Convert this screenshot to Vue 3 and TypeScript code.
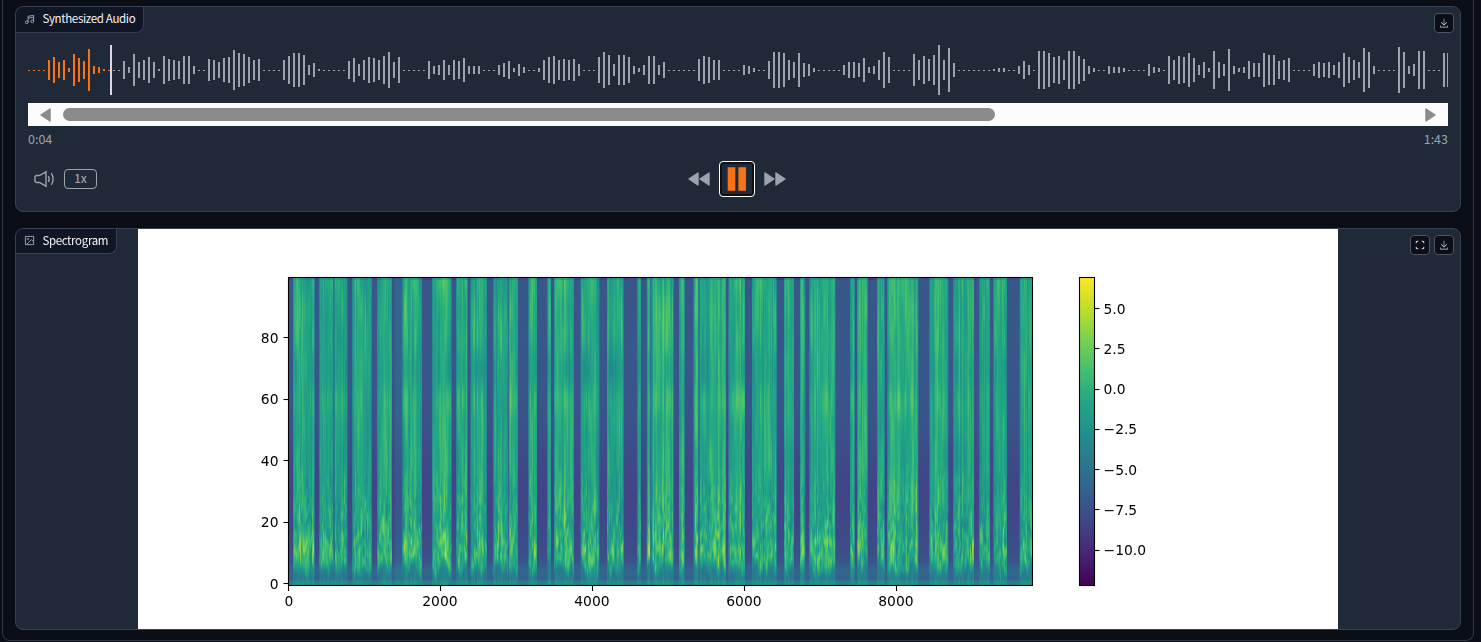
<script setup lang="ts">
import { onMounted, ref } from 'vue'

const heights: number[] = [
  1, 1, 1, 1, 20, 26, 16, 20, 4, 32, 24, 18, 42, 8, 6, 2, 1, 1, 1, 18, 6, 32, 16, 20, 26, 16, 2, 28, 22, 20,
  18, 28, 28, 8, 1, 1, 22, 20, 16, 24, 26, 40, 34, 32, 26, 20, 22, 1, 1, 1, 1, 20, 28, 34, 34, 30, 10, 14, 2, 1,
  1, 1, 1, 1, 18, 24, 12, 20, 26, 24, 20, 28, 36, 16, 26, 1, 1, 1, 1, 1, 18, 8, 10, 20, 10, 20, 18, 24, 8, 8,
  8, 1, 1, 1, 10, 14, 18, 4, 12, 6, 1, 1, 4, 20, 26, 28, 20, 22, 20, 22, 12, 1, 1, 1, 26, 36, 30, 12, 30, 30,
  26, 8, 4, 10, 28, 28, 10, 16, 1, 1, 1, 1, 1, 1, 22, 28, 26, 20, 20, 1, 1, 1, 1, 10, 8, 4, 1, 1, 18, 36,
  36, 34, 20, 16, 34, 14, 12, 4, 1, 1, 1, 1, 1, 10, 16, 16, 14, 24, 6, 8, 20, 36, 26, 1, 1, 1, 1, 32, 20, 28,
  22, 30, 50, 20, 44, 14, 1, 1, 1, 1, 1, 1, 1, 2, 4, 4, 1, 1, 8, 18, 10, 1, 38, 38, 34, 26, 28, 20, 38, 38,
  28, 22, 8, 4, 1, 1, 8, 6, 6, 4, 1, 1, 1, 1, 12, 6, 4, 1, 28, 20, 28, 26, 34, 24, 10, 16, 4, 38, 16, 12,
  42, 8, 4, 6, 18, 14, 14, 34, 30, 30, 18, 20, 24, 1, 1, 1, 1, 12, 16, 14, 16, 10, 16, 34, 26, 20, 16, 44, 36, 8,
  1, 1, 1, 1, 46, 36, 8, 12, 38, 38, 1, 1, 1, 34,
]
const bars = heights.map((h, i) => ({ x: i * 5, h, y: h === 1 ? 25 : 25 - h / 2, played: i < 17 }))

const yTicks = [0, 20, 40, 60, 80].map((v) => ({
  v,
  y: Math.round(354 - v * 3.07) + 0.5,
  base: Math.floor(360.2 - v * 3.075),
}))
const xTicks = [0, 2000, 4000, 6000, 8000].map((v) => ({ v, x: Math.round(150.4 + v * 0.0759) + 0.5 }))
const barTicks = ['5.0', '2.5', '0.0', '−2.5', '−5.0', '−7.5', '−10.0'].map((v, i) => ({
  v,
  y: Math.floor(79.4 + i * 40.3) + 0.5,
  base: Math.floor(85 + i * 40.27),
}))

const viridis: [number, number, number][] = [
  [68, 1, 84], [72, 36, 117], [65, 68, 135], [53, 95, 141], [42, 120, 142], [33, 145, 140],
  [34, 168, 132], [68, 191, 112], [122, 209, 81], [189, 223, 38], [253, 231, 37],
]

// voiced stretches, in pixels of the plot area
const segments: [number, number][] = [
  [4, 25.5], [30.3, 44.5], [45.5, 58.3], [63.3, 82.7], [88, 103], [113.3, 133], [143.3, 162.5],
  [167.3, 178.5], [181.5, 197.7], [204.3, 219.3], [219.9, 229], [239.5, 248], [258.3, 262], [265, 285],
  [291.7, 310.3], [318, 334.7], [348.3, 352], [357.7, 361.5], [362.3, 384.5], [390, 395.7],
  [404.5, 409.5], [410.5, 437], [439.5, 456], [463, 487.7], [495, 505], [511, 516.3], [520.3, 546.3],
  [561, 565.7], [568, 578.7], [588, 595.7], [598.3, 629.3], [640.3, 659.3], [664.3, 685], [690.3, 701],
  [704.3, 718], [730.7, 744],
]

function hash(x: number, y: number, s: number): number {
  let h = Math.imul(x + 101, 374761393) ^ Math.imul(y + 57, 668265263) ^ Math.imul(s + 11, 1274126177)
  h = Math.imul(h ^ (h >>> 13), 1274126177)
  h = Math.imul(h ^ (h >>> 15), 2246822519)
  return ((h ^ (h >>> 16)) >>> 0) / 4294967295
}
function noise(x: number, y: number, sx: number, sy: number, s: number): number {
  const fx = x / sx
  const fy = y / sy
  const ix = Math.floor(fx)
  const iy = Math.floor(fy)
  const ux = fx - ix
  const q = fy - iy
  const uy = q * q * (3 - 2 * q)
  const a = hash(ix, iy, s) * (1 - ux) + hash(ix + 1, iy, s) * ux
  const b = hash(ix, iy + 1, s) * (1 - ux) + hash(ix + 1, iy + 1, s) * ux
  return (a * (1 - uy) + b * uy) * 2 - 1
}
const clamp = (v: number): number => Math.min(1, Math.max(0, v))
const bump = (v: number, c: number, w: number): number => Math.exp(-(((v - c) / w) ** 2))

const spectrogram = ref<HTMLCanvasElement | null>(null)
onMounted(() => {
  const ctx = spectrogram.value?.getContext('2d')
  if (!ctx) return
  const W = 744
  const H = 308
  const img = ctx.createImageData(W, H)
  for (let x = 0; x < W; x++) {
    let voiced = 0
    let id = 0
    segments.forEach(([a, b], k) => {
      const cover = clamp(Math.min(x + 1, b) - Math.max(x, a))
      const edge = x - a < 1 || b - x < 1.5 ? 0.85 : 1
      if (cover * edge > voiced) {
        voiced = cover * edge
        id = k
      }
    })
    const column = noise(x, 0, 1.1, 1, 1)
    const group = hash(id, 4, 8) - 0.5
    const cutoff = 5.8 - 3 * noise(x, 3, 3, 1, 6) + 1.5 * column
    for (let y = 0; y < H; y++) {
      const mel = (H - y) / 3.08
      let quiet = 0.268 - 0.065 * bump(mel, 29, 21) + 0.004 * noise(x, y, 1, 20, 9)
      quiet += 0.08 * bump(mel, 4.5, 3)
      quiet += 0.15 * clamp(2.4 - mel)
      if (x > 105 && x < 114) quiet += 0.06
      const low = clamp((42 - mel) / 22)
      let loud = 0.605 + 0.07 * column + 0.06 * noise(x, y, 1.1, 30, 2)
      loud += 0.045 * noise(id * 9 + x / 6, y, 1, 45, 3) + 0.02 * group
      loud += 0.03 * bump(mel, 60, 5) * (0.7 + 2 * group) - 0.02 * bump(mel, 70, 6)
      loud += 0.015 * bump(mel, 87, 12) - 0.01 * bump(mel, 42, 7)
      loud += low * 0.125 * noise(x, y + 5 * Math.sin(x * 0.7), 1.1, 9, 5) + 0.01 * low
      loud += 0.1 * bump(mel, 12, 5) * (0.5 + 1.1 * noise(x, y, 1.6, 9, 7))
      const fade = clamp((mel - cutoff) / 4 + 0.5)
      loud = loud * fade + (0.42 + 0.05 * column + 0.08 * clamp(2.4 - mel)) * (1 - fade)
      let v = quiet + (loud - quiet) * voiced
      if (y < 2) v -= 0.06 + 0.04 * noise(x, 9, 5, 1, 12)
      v = clamp(v) * 10
      const k = Math.min(9, Math.floor(v))
      const o = (y * W + x) * 4
      for (let c = 0; c < 3; c++) img.data[o + c] = viridis[k][c] + (viridis[k + 1][c] - viridis[k][c]) * (v - k)
      img.data[o + 3] = 255
    }
  }
  ctx.putImageData(img, 0, 0)
})
</script>

<template>
  <main class="frame">
    <section class="panel audio">
      <header class="bar">
        <div class="label">
          <svg class="label-icon" viewBox="0 0 24 24"><path d="M9 18V5l12-2v13M9 9l12-2" /><circle cx="6" cy="18" r="3" /><circle cx="18" cy="16" r="3" /></svg>
          <span>Synthesized Audio</span>
        </div>
        <div class="tools">
          <button class="tool" aria-label="Download">
            <svg viewBox="0 0 32 32"><path d="M26 24v4H6v-4H4v6h24v-6zM26 14l-1.400-1.400L17 20.200V2h-2v18.200L7.400 12.600 6 14l10 10z" /></svg>
          </button>
        </div>
      </header>
      <div class="player">
        <svg class="wave" width="1420" height="50" viewBox="0 0 1420 50">
          <rect v-for="b in bars" :key="b.x" :x="b.x" :y="b.y" width="2" :height="b.h" :class="{ played: b.played }" />
          <rect x="1419" y="8" width="1" height="34" />
          <rect class="cursor" x="82" y="0" width="2" height="50" />
        </svg>
        <div class="scroll">
          <svg width="12" height="14" viewBox="0 0 12 14"><path d="M11 1v12L2 7z" /></svg>
          <div class="track"><div class="thumb"></div></div>
          <svg width="12" height="14" viewBox="0 0 12 14"><path d="M1 1v12l9-6z" /></svg>
        </div>
        <div class="times"><span>0:04</span><span>1:43</span></div>
        <div class="controls">
          <div class="left">
            <svg class="volume" width="22" height="18" viewBox="0 0 22 18"><path d="M2.200 5.500h3.300L12 1.800v14.400l-6.500-3.700H2.200L1 11.500v-5zM14.300 6q1.800 3 0 6M17.300 3.200q3.600 5.800 0 11.600" /></svg>
            <button class="speed">1x</button>
          </div>
          <div class="play">
            <svg width="22" height="14" viewBox="0 0 22 14"><path d="M10 1v12L1 7zM21 1v12L12 7z" /></svg>
            <button class="pause" aria-label="Pause">
              <svg width="20" height="24" viewBox="0 0 20 24"><path d="M.700.300h7.600v23.400H.700zM11.400.300H19v23.400h-7.600z" /></svg>
            </button>
            <svg width="22" height="14" viewBox="0 0 22 14"><path d="M1 1v12l9-6zM12 1v12l9-6z" /></svg>
          </div>
        </div>
      </div>
    </section>

    <section class="panel picture">
      <div class="plot">
        <canvas ref="spectrogram" class="heat" width="744" height="308"></canvas>
        <svg class="axes" width="1200" height="400" viewBox="0 0 1200 400">
          <defs>
            <linearGradient id="scale" x1="0" y1="1" x2="0" y2="0">
              <stop v-for="(c, i) in viridis" :key="i" :offset="i / 10" :stop-color="`rgb(${c.join(',')})`" />
            </linearGradient>
          </defs>
          <rect class="line" x="150.500" y="48.500" width="744" height="308" />
          <g v-for="t in yTicks" :key="'y' + t.v">
            <path class="line" :d="`M145.500 ${t.y}h5`" />
            <text x="140.500" :y="t.base" text-anchor="end">{{ t.v }}</text>
          </g>
          <g v-for="t in xTicks" :key="'x' + t.v">
            <path class="line" :d="`M${t.x} 357v5`" />
            <text :x="t.v ? t.x - 0.6 : t.x + 0.5" y="377" text-anchor="middle">{{ t.v }}</text>
          </g>
          <rect x="942" y="49" width="14" height="307" fill="url(#scale)" />
          <rect class="line" x="941.500" y="48.500" width="15" height="308" />
          <g v-for="t in barTicks" :key="t.v">
            <path class="line" :d="`M957 ${t.y}h4.500`" />
            <text x="965.500" :y="t.base">{{ t.v }}</text>
          </g>
        </svg>
      </div>
      <header class="bar over">
        <div class="label">
          <svg class="label-icon" viewBox="0 0 24 24"><path d="M3 3h18v18H3zM5 21L16 10l5 5" /><circle cx="8.500" cy="8.500" r="1.500" /></svg>
          <span>Spectrogram</span>
        </div>
        <div class="tools">
          <button class="tool" aria-label="Fullscreen">
            <svg class="stroke" viewBox="0 0 24 24"><path d="M8 3H5a2 2 0 0 0-2 2v3m18 0V5a2 2 0 0 0-2-2h-3m0 18h3a2 2 0 0 0 2-2v-3M3 16v3a2 2 0 0 0 2 2h3" /></svg>
          </button>
          <button class="tool" aria-label="Download">
            <svg viewBox="0 0 32 32"><path d="M26 24v4H6v-4H4v6h24v-6zM26 14l-1.400-1.400L17 20.200V2h-2v18.200L7.400 12.600 6 14l10 10z" /></svg>
          </button>
        </div>
      </header>
    </section>
  </main>
</template>

<style>
body {
  background: #0b0d17;
  overflow: hidden;
}
</style>

<style scoped>
* {
  box-sizing: border-box;
}
.frame {
  width: 1472px;
  height: 641px;
  margin-left: 2px;
  padding: 6px 12px 0;
  border: 1px solid #2f3747;
  border-top: 0;
  border-radius: 0 0 8px 8px;
  display: flex;
  flex-direction: column;
  gap: 16px;
  font-family: 'Noto Sans CJK SC', 'Noto Sans', sans-serif;
}
button {
  font: inherit;
  margin: 0;
  padding: 0;
}
.panel {
  position: relative;
  width: 1446px;
  border: 1px solid #374151;
  border-radius: 8px;
  background: #202937;
  overflow: hidden;
  flex: none;
}
.audio {
  height: 206px;
}
.picture {
  height: 402px;
}
.bar {
  display: flex;
  justify-content: space-between;
  align-items: flex-start;
  height: 38px;
}
.over {
  position: absolute;
  inset: 0 0 auto 0;
}
.label {
  display: flex;
  align-items: center;
  height: 26px;
  padding: 0 8px 1px;
  background: #111627;
  border: solid #374151;
  border-width: 0 1px 1px 0;
  border-radius: 0 0 8px 0;
  color: #f3f4f6;
  font-size: 11.5px;
  letter-spacing: -0.34px;
  line-height: 14px;
}
.picture .label {
  height: 25px;
}
.label span {
  margin-top: -2px;
}
.label-icon {
  width: 11px;
  height: 11px;
  margin-right: 7.4px;
  fill: none;
  stroke: #a3a8b2;
  stroke-width: 2;
}
.tools {
  display: flex;
  gap: 4px;
  padding: 6px 6px 0 0;
}
.tool {
  width: 20px;
  height: 20px;
  border: 1px solid #4b5563;
  border-radius: 4px;
  background: #0b0d17;
  display: flex;
  align-items: center;
  justify-content: center;
}
.tool svg {
  width: 10px;
  height: 10px;
  fill: #d1d5db;
}
.tool .stroke {
  fill: none;
  stroke: #d1d5db;
  stroke-width: 2.5;
}
.player {
  padding: 0 12px;
  color: #9ca3af;
}
.wave {
  display: block;
  fill: #9ca3af;
}
.played {
  fill: #f97316;
}
.cursor {
  fill: #ddd6ea;
}
.scroll {
  height: 23px;
  margin-top: 8px;
  padding: 0 11px;
  background: #fcfcfc;
  display: flex;
  align-items: center;
  justify-content: space-between;
}
.scroll svg {
  fill: #8b8b8b;
  stroke: #8b8b8b;
  stroke-width: 1.5;
  stroke-linejoin: round;
}
.track {
  width: 1350px;
}
.thumb {
  width: 932px;
  height: 13px;
  border-radius: 7px;
  background: #8b8b8b;
}
.times {
  display: flex;
  justify-content: space-between;
  height: 28px;
  font-size: 12.5px;
  line-height: 26px;
}
.controls {
  display: grid;
  grid-template-columns: 1fr auto 1fr;
  align-items: center;
  height: 36px;
  margin-top: 7px;
}
.left {
  display: flex;
  align-items: center;
  padding-left: 6px;
  gap: 8px;
}
.volume {
  fill: none;
  stroke: #9ca3af;
  stroke-width: 1.4;
}
.speed {
  width: 33px;
  height: 20px;
  border: 1px solid #9ca3af;
  border-radius: 4px;
  background: none;
  color: #9ca3af;
  font-size: 11.5px;
  font-weight: 500;
  line-height: 14px;
  padding-bottom: 3px;
}
.play {
  display: flex;
  align-items: center;
  gap: 9px;
  margin-right: 2px;
}
.play > svg {
  fill: #9ca3af;
  stroke: #9ca3af;
  stroke-width: 1.4;
  stroke-linejoin: round;
}
.pause {
  width: 36px;
  height: 36px;
  border: 1px solid #fff;
  border-radius: 4px;
  background: none;
  box-shadow: inset 0 0 0 2px #101010;
  display: flex;
  align-items: center;
  justify-content: center;
}
.pause svg {
  fill: #f97316;
}
.plot {
  position: relative;
  width: 1200px;
  height: 400px;
  margin: 0 auto;
  background: #fff;
}
.heat {
  position: absolute;
  left: 151px;
  top: 49px;
}
.axes {
  position: absolute;
  left: 0;
  top: 0;
}
.axes text {
  font-family: 'DejaVu Sans', sans-serif;
  font-size: 13.89px;
  fill: #000;
}
.line {
  fill: none;
  stroke: #000;
  stroke-width: 1.1;
}
</style>
